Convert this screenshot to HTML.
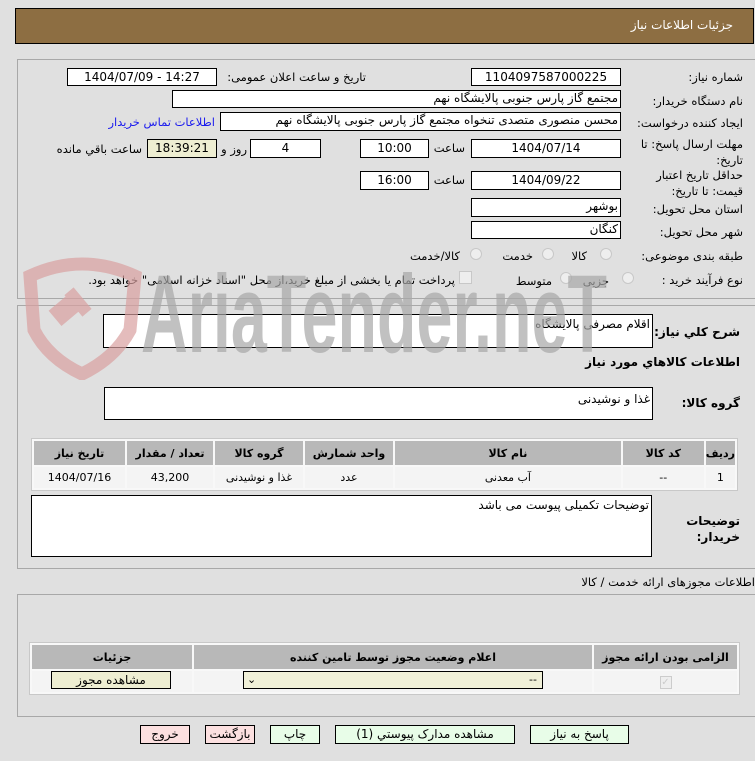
<!DOCTYPE html>
<html><head><meta charset="utf-8">
<style>
*{margin:0;padding:0;box-sizing:border-box}
body{width:755px;height:761px;background:#e0e0e0;position:relative;overflow:hidden;font-family:"DejaVu Sans","Liberation Sans",sans-serif;font-size:11.5px;color:#000}
.a{position:absolute;white-space:nowrap}
.r{direction:rtl;text-align:right}
.box{position:absolute;background:#fff;border:1px solid #000;font-size:12px;line-height:16px;text-align:center}
.tl{position:absolute;background:#fff;border:1px solid #000;direction:rtl;text-align:right;padding:2px 2px;font-size:12px}
.pan{position:absolute;border-top:1px solid #a8a8a8;border-left:1px solid #a8a8a8;border-bottom:1px solid #a8a8a8}
.rad{position:absolute;width:12px;height:12px;border-radius:50%;border:1px solid #c8c8c8;background:#eee}
.b{font-weight:bold}
table{border-collapse:separate;border-spacing:2px;position:absolute;font-size:11px}
th{background:#b8b8b8;font-weight:bold;height:24px}
td{background:#f4f4f4;text-align:center;height:21px}
.btn{position:absolute;height:19px;border:1px solid #000;text-align:center;font-size:12px;line-height:17px;background:#e8fde8}
.pk{background:#fce0e0}
</style></head><body>
<div class="a" style="left:15px;top:8px;width:739px;height:36px;background:#8d6e42;border:1px solid #000"></div>
<div class="a r" style="right:22px;top:18px;color:#fff;font-size:12px">جزئیات اطلاعات نیاز</div>

<div class="pan" style="left:17px;top:59px;width:740px;height:240px"></div>
<div class="a r" style="right:12px;top:70px">شماره نیاز:</div>
<div class="box" style="left:471px;top:68px;width:150px;height:18px">1104097587000225</div>
<div class="a r" style="right:389px;top:70px">تاریخ و ساعت اعلان عمومی:</div>
<div class="box" style="left:67px;top:68px;width:150px;height:18px">1404/07/09 - 14:27</div>

<div class="a r" style="right:12px;top:94px">نام دستگاه خریدار:</div>
<div class="tl" style="left:172px;top:90px;width:449px;height:18px;padding:0 2px">مجتمع گاز پارس جنوبی  پالایشگاه نهم</div>

<div class="a r" style="right:12px;top:116px">ایجاد کننده درخواست:</div>
<div class="tl" style="left:220px;top:112px;width:401px;height:19px;padding:0 2px">محسن منصوری متصدی تنخواه مجتمع گاز پارس جنوبی  پالایشگاه نهم</div>
<div class="a r" style="right:540px;top:115px;color:#1a1aee">اطلاعات تماس خریدار</div>

<div class="a r" style="right:12px;top:136px;line-height:16px;white-space:normal;width:110px">مهلت ارسال پاسخ: تا تاریخ:</div>
<div class="box" style="left:471px;top:139px;width:150px;height:19px">1404/07/14</div>
<div class="a r" style="right:290px;top:141px">ساعت</div>
<div class="box" style="left:360px;top:139px;width:69px;height:19px">10:00</div>
<div class="box" style="left:250px;top:139px;width:71px;height:19px">4</div>
<div class="a r" style="right:508px;top:142px">روز و</div>
<div class="box" style="left:147px;top:139px;width:70px;height:19px;background:#eeeed2">18:39:21</div>
<div class="a r" style="right:613px;top:142px">ساعت باقي مانده</div>

<div class="a r" style="right:12px;top:167px;line-height:16px;white-space:normal;width:105px">حداقل تاریخ اعتبار قیمت: تا تاریخ:</div>
<div class="box" style="left:471px;top:171px;width:150px;height:19px">1404/09/22</div>
<div class="a r" style="right:290px;top:173px">ساعت</div>
<div class="box" style="left:360px;top:171px;width:69px;height:19px">16:00</div>

<div class="a r" style="right:12px;top:202px">استان محل تحویل:</div>
<div class="tl" style="left:471px;top:198px;width:150px;height:19px;padding:0 2px">بوشهر</div>
<div class="a r" style="right:12px;top:225px">شهر محل تحویل:</div>
<div class="tl" style="left:471px;top:221px;width:150px;height:18px;padding:0 2px">کنگان</div>

<div class="a r" style="right:12px;top:249px">طبقه بندی موضوعی:</div>
<div class="rad" style="left:600px;top:248px"></div><div class="a r" style="right:168px;top:249px">کالا</div>
<div class="rad" style="left:542px;top:248px"></div><div class="a r" style="right:222px;top:249px">خدمت</div>
<div class="rad" style="left:470px;top:248px"></div><div class="a r" style="right:295px;top:249px">کالا/خدمت</div>

<div class="a r" style="right:12px;top:273px">نوع فرآیند خرید :</div>
<div class="rad" style="left:622px;top:272px"></div><div class="a r" style="right:146px;top:274px">جزیی</div>
<div class="rad" style="left:560px;top:272px"></div><div class="a r" style="right:203px;top:274px">متوسط</div>
<div class="a" style="left:459px;top:271px;width:13px;height:13px;border:1px solid #c8c8c8;background:#eee"></div>
<div class="a r" style="right:300px;top:273px">پرداخت تمام یا بخشی از مبلغ خرید،از محل "اسناد خزانه اسلامی" خواهد بود.</div>

<div class="pan" style="left:17px;top:305px;width:740px;height:264px"></div>
<div class="a r b" style="right:15px;top:325px;font-size:12px">شرح کلي نیاز:</div>
<div class="tl" style="left:103px;top:314px;width:550px;height:34px">اقلام مصرفی پالایشگاه</div>
<div class="a r b" style="right:15px;top:355px;font-size:12px">اطلاعات کالاهاي مورد نیاز</div>
<div class="a r b" style="right:15px;top:396px;font-size:12px">گروه کالا:</div>
<div class="tl" style="left:104px;top:387px;width:549px;height:33px;padding-top:4px">غذا و نوشیدنی</div>

<table style="left:31px;top:438px;width:707px;direction:rtl;background:#f8f8f8;border:1px solid #c8c8c8">
<tr><th style="width:28px">ردیف</th><th style="width:81px">کد کالا</th><th>نام کالا</th><th style="width:88px">واحد شمارش</th><th style="width:88px">گروه کالا</th><th style="width:86px">تعداد / مقدار</th><th style="width:91px">تاریخ نیاز</th></tr>
<tr><td>1</td><td>--</td><td>آب معدنی</td><td>عدد</td><td>غذا و نوشیدنی</td><td>43,200</td><td>1404/07/16</td></tr>
</table>

<div class="tl" style="left:31px;top:495px;width:621px;height:62px">توضیحات تکمیلی پیوست می باشد</div>
<div class="a r b" style="right:15px;top:513px;line-height:16px;font-size:12px">توضیحات<br>خریدار:</div>

<div class="a r" style="right:0px;top:575px">اطلاعات مجوزهای ارائه خدمت / کالا</div>
<div class="pan" style="left:17px;top:594px;width:740px;height:123px"></div>
<table style="left:29px;top:642px;width:711px;direction:rtl;background:#f8f8f8;border:1px solid #c8c8c8">
<tr><th style="width:143px">الزامی بودن ارائه مجوز</th><th>اعلام وضعیت مجوز توسط تامین کننده</th><th style="width:160px">جزئیات</th></tr>
<tr><td><span style="display:inline-block;width:12px;height:13px;border:1px solid #ccc;background:#eee;color:#ccc;font-size:10px;line-height:11px">✓</span></td><td></td><td></td></tr>
</table>
<div class="a" style="left:243px;top:671px;width:300px;height:18px;border:1px solid #000;background:#f0f0d8;font-size:11px;line-height:16px"><span style="position:absolute;left:3px">⌄</span><span style="position:absolute;right:5px">--</span></div>
<div class="btn" style="left:51px;top:671px;width:120px;height:18px;background:#eeeed2">مشاهده مجوز</div>

<div class="btn" style="left:530px;top:725px;width:99px">پاسخ به نیاز</div>
<div class="btn" style="left:335px;top:725px;width:180px">مشاهده مدارک پیوستي (1)</div>
<div class="btn" style="left:270px;top:725px;width:50px">چاپ</div>
<div class="btn pk" style="left:205px;top:725px;width:50px">بازگشت</div>
<div class="btn pk" style="left:140px;top:725px;width:50px">خروج</div>

<!-- watermark on top -->
<svg class="a" style="left:0;top:240px;opacity:0.7" width="700" height="140" viewBox="0 240 700 140">
<path d="M30 276 Q82 252 135 276 L130 330 Q115 358 82 374 Q48 358 34 330 Z" fill="none" stroke="#d9a0a0" stroke-width="13"/>
<rect x="52" y="300" width="26" height="20" fill="#d9a0a0" transform="rotate(-40 65 310)"/>
<rect x="72" y="288" width="12" height="28" fill="#d9a0a0" transform="rotate(-40 78 302)"/>
<text x="141" y="352" font-family="Liberation Sans" font-weight="bold" font-size="110" fill="#a8a8a8" textLength="466" lengthAdjust="spacingAndGlyphs">AriaTender.neT</text>
</svg>
</body></html>
